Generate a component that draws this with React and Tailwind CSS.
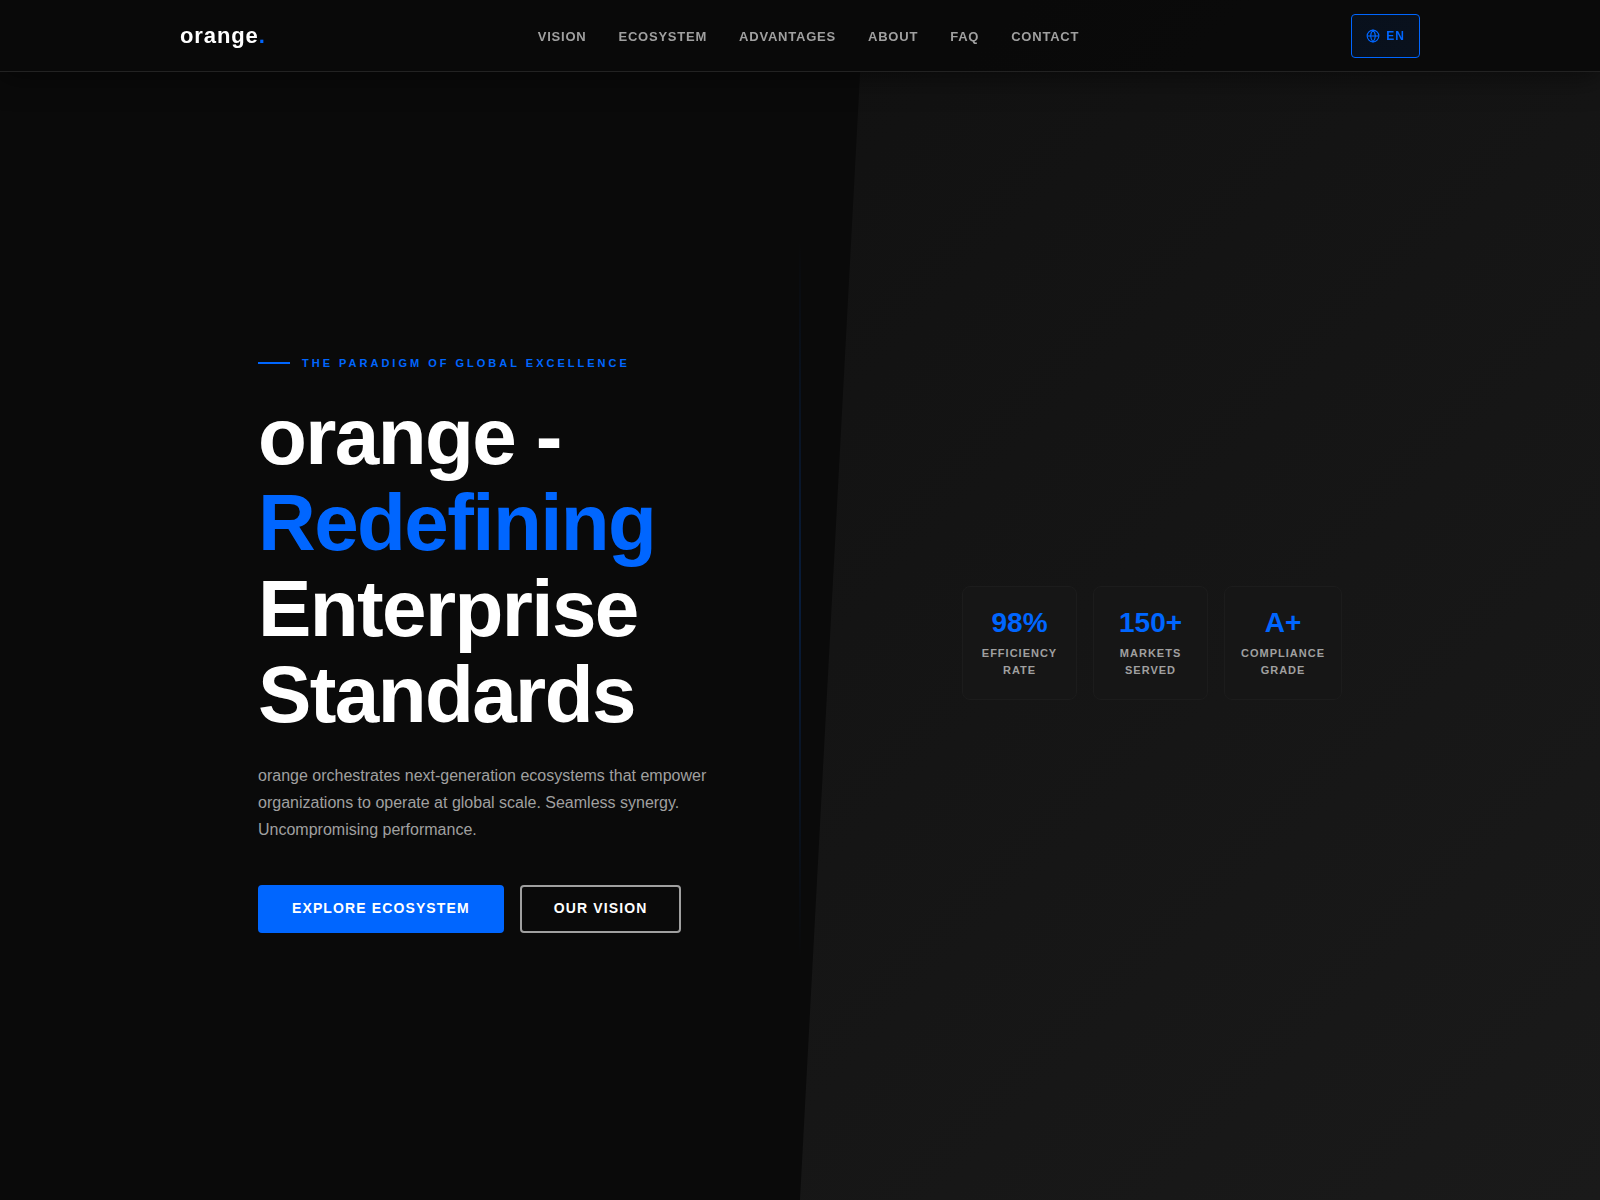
const links = ["Vision", "Ecosystem", "Advantages", "About", "FAQ", "Contact"];

const stats = [
  { value: "98%", label: "Efficiency Rate" },
  { value: "150+", label: "Markets Served" },
  { value: "A+", label: "Compliance Grade" },
];

function GlobeIcon() {
  return (
    <svg
      className="h-3.5 w-3.5"
      viewBox="0 0 24 24"
      fill="none"
      stroke="currentColor"
      strokeWidth="2"
      aria-hidden="true"
    >
      <circle cx="12" cy="12" r="10" />
      <path d="M2 12h20" />
      <path d="M12 2a15.3 15.3 0 0 1 4 10 15.3 15.3 0 0 1-4 10 15.3 15.3 0 0 1-4-10 15.3 15.3 0 0 1 4-10z" />
    </svg>
  );
}

function Header() {
  return (
    <header className="fixed inset-x-0 top-0 z-10 border-b border-[#222222] bg-[#0a0a0a]/95 shadow-[0_4px_30px_rgba(0,0,0,0.5)]">
      <div className="mx-auto flex h-[71px] max-w-[1240px] items-center justify-between">
        <a href="#top" className="text-[22px] font-bold tracking-[0.04em] text-white">
          orange<span className="text-[#0066ff]">.</span>
        </a>

        <nav className="flex gap-8 pt-0.5">
          {links.map((link) => (
            <a
              key={link}
              href={`#${link.toLowerCase()}`}
              className="text-[13px] font-bold uppercase tracking-[0.06em] text-[#a0a0a0] hover:text-white"
            >
              {link}
            </a>
          ))}
        </nav>

        <button
          type="button"
          className="flex h-11 items-center gap-1.5 rounded border border-[#0066ff] bg-[#0066ff]/8 px-3.5 text-xs font-bold tracking-[1px] text-[#0066ff]"
        >
          <GlobeIcon />
          EN
        </button>
      </div>
    </header>
  );
}

export default function App() {
  return (
    <div id="top" className="bg-[#0a0a0a] font-['Liberation_Sans',Arial,sans-serif]">
      <Header />

      <main className="relative flex min-h-screen items-center pt-[86px]">
        <div className="absolute inset-y-0 right-0 w-1/2 bg-linear-135 from-[#111111] to-[#1a1a1a] [clip-path:polygon(8%_0,100%_0,100%_100%,0_100%)]" />
        <div className="absolute inset-y-1/5 left-1/2 w-0.5 -translate-x-1/2 bg-linear-to-b from-transparent via-[#0066ff] to-transparent opacity-20" />

        <div className="relative mx-auto grid w-full max-w-[1084px] grid-cols-2 items-center">
          <section>
            <p className="mb-[22px] flex items-center gap-3 text-[11px] leading-[18px] font-bold uppercase tracking-[3px] text-[#0066ff]">
              <span className="h-0.5 w-8 bg-[#0066ff]" />
              The Paradigm of Global Excellence
            </p>

            <h1 className="mb-6 text-[80px] leading-[86px] font-bold tracking-[-0.02em] text-white">
              orange - <span className="text-[#0066ff]">Redefining</span> Enterprise Standards
            </h1>

            <p className="mb-[42px] max-w-[480px] text-base leading-[27px] text-[#a0a0a0]">
              orange orchestrates next-generation ecosystems that empower organizations to operate at global
              scale. Seamless synergy. Uncompromising performance.
            </p>

            <div className="flex gap-4">
              <a
                href="#ecosystem"
                className="rounded border-2 border-[#0066ff] bg-[#0066ff] px-8 pt-[13px] pb-[15px] text-sm leading-4 font-bold uppercase tracking-[0.08em] text-white"
              >
                Explore Ecosystem
              </a>
              <a
                href="#vision"
                className="rounded border-2 border-[#a0a0a0] px-8 pt-[13px] pb-[15px] text-sm leading-4 font-bold uppercase tracking-[0.08em] text-white"
              >
                Our Vision
              </a>
            </div>
          </section>

          <section className="grid w-[380px] grid-cols-[repeat(3,1fr)] gap-4 justify-self-end text-center">
            {stats.map((stat) => (
              <div key={stat.value} className="rounded-lg border border-[#1c1c1c] bg-[#161616] px-4 py-5">
                <div className="mb-1.5 text-[28px] leading-8 font-bold text-[#0066ff]">{stat.value}</div>
                <div className="text-[11px] leading-[17px] font-bold uppercase tracking-[1px] text-[#a0a0a0]">
                  {stat.label}
                </div>
              </div>
            ))}
          </section>
        </div>
      </main>
    </div>
  );
}
